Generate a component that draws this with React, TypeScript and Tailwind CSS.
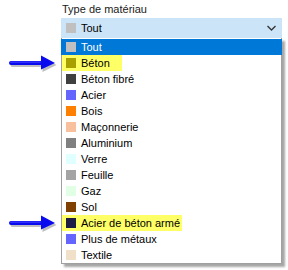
import React from "react";

const items: { label: string; color: string; hl?: number }[] = [
  { label: "Tout", color: "#c0c0c0" },
  { label: "Béton", color: "#a8a000", hl: 60 },
  { label: "Béton fibré", color: "#404040" },
  { label: "Acier", color: "#6464ff" },
  { label: "Bois", color: "#ff8000" },
  { label: "Maçonnerie", color: "#f8c09c" },
  { label: "Aluminium", color: "#808080" },
  { label: "Verre", color: "#e0ffff" },
  { label: "Feuille", color: "#a4a4a4" },
  { label: "Gaz", color: "#e0ffe4" },
  { label: "Sol", color: "#804000" },
  { label: "Acier de béton armé", color: "#1c1c44", hl: 120 },
  { label: "Plus de métaux", color: "#6464ff" },
  { label: "Textile", color: "#f0e0c8" },
];

function Arrow({ top }: { top: number }) {
  return (
    <svg
      className="absolute left-0"
      style={{ top }}
      width="60"
      height="18"
      viewBox="0 0 60 18"
    >
      <g fill="#8a8a8a" opacity="0.55" transform="translate(1.5,2)">
        <rect x="9" y="6" width="34" height="4" rx="2" />
        <polygon points="41,0 55,8 41,15" />
      </g>
      <rect x="9" y="6" width="34" height="4" rx="2" fill="#0a0aee" />
      <polygon points="41,0.5 55,8 41,14.5" fill="#0a0aee" />
      <rect x="10" y="6.5" width="31" height="1.2" rx="0.6" fill="#3b3bff" />
    </svg>
  );
}

export default function App() {
  return (
    <div
      className="relative w-[288px] h-[270px] bg-white text-black text-[11px] overflow-hidden"
      style={{ fontFamily: "'Liberation Sans', Arial, sans-serif" }}
    >
      <div className="pl-[62px] pt-[3px] h-[18px] leading-[12px] text-[#1a1a1a]">
        Type de matériau
      </div>
      <div className="ml-[61px] w-[221px] h-[20px] bg-[#cce4f7] flex items-center pl-[5px] pr-[5px]">
        <span className="w-[10px] h-[10px] bg-[#c0c0c0] shrink-0" />
        <span className="ml-[5px] leading-[16px] flex-1">Tout</span>
        <svg width="9" height="6" viewBox="0 0 9 6" className="mr-[1px]">
          <path d="M0.5 1 L4.5 5 L8.5 1" fill="none" stroke="#333" strokeWidth="1.3" />
        </svg>
      </div>
      <div className="ml-[61px] w-[221px] bg-white border-x border-b border-[#a0a0a0] pt-[1px] shadow-[3px_3px_2px_rgba(0,0,0,0.35)]">
        {items.map((it, i) => (
          <div
            key={i}
            className={
              "relative h-[16px] flex items-center " +
              (i === 0 ? "bg-[#0078d7] text-white -mx-[1px] pl-[5px]" : "pl-[4px]")
            }
          >
            {it.hl ? (
              <span
                className="absolute left-0 top-0 h-[16px] bg-[#ffff66]"
                style={{ width: it.hl }}
              />
            ) : null}
            <span
              className="relative w-[10px] h-[10px] shrink-0"
              style={{ backgroundColor: it.color }}
            />
            <span className="relative ml-[5px] leading-[16px] whitespace-nowrap">
              {it.label}
            </span>
          </div>
        ))}
      </div>
      <Arrow top={55} />
      <Arrow top={215} />
    </div>
  );
}
